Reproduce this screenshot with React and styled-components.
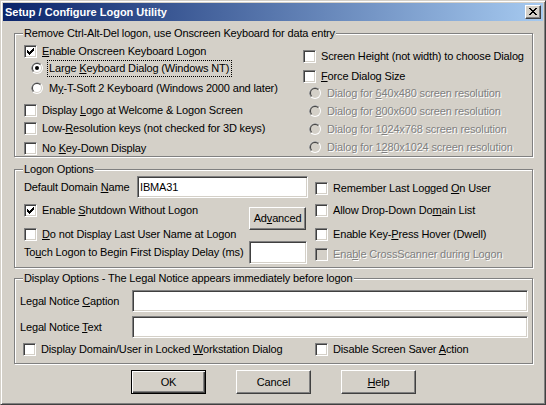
import React from 'react';
import styled, { createGlobalStyle } from 'styled-components';

const FACE = '#D4D0C8';
const SHADOW = '#808080';
const DARK = '#404040';

const GlobalStyle = createGlobalStyle`
  html, body {
    margin: 0;
    padding: 0;
    background: ${FACE};
  }
  body {
    font-family: "Liberation Sans", Arial, sans-serif;
    font-size: 11px;
  }
`;

const Window = styled.div`
  width: 546px;
  height: 405px;
  box-sizing: border-box;
  border: 1px solid;
  border-color: ${FACE} ${DARK} ${DARK} ${FACE};
  box-shadow: inset 1px 1px #fff, inset -1px -1px ${SHADOW};
  padding: 2px;
  background: ${FACE};
  display: flex;
  flex-direction: column;
  font: 11px "Liberation Sans", Arial, sans-serif;
  letter-spacing: -0.15px;
  color: #000;
`;

const TitleBar = styled.div`
  height: 18px;
  flex-shrink: 0;
  display: flex;
  align-items: center;
  padding: 0 2px;
  background: linear-gradient(to right, #0A246A, #A6CAF0);
  color: #fff;
  font-weight: bold;
  letter-spacing: 0;
`;

const Title = styled.span`
  flex: 1;
  line-height: 13px;
  white-space: nowrap;
`;

// raised frame shared by push buttons
const raised = `
  box-sizing: border-box;
  background: ${FACE};
  border: 1px solid;
  border-color: #fff ${DARK} ${DARK} #fff;
  box-shadow: inset -1px -1px ${SHADOW};
  padding: 0;
  font: 11px "Liberation Sans", Arial, sans-serif;
  letter-spacing: -0.15px;
  color: #000;
`;

const CloseButton = styled.button`
  ${raised}
  width: 16px;
  height: 14px;
  display: flex;
  align-items: center;
  justify-content: center;
  svg { display: block; }
`;

const Body = styled.div`
  display: flex;
  flex-direction: column;
  padding: 12px 10px 0 11px;
`;

const Group = styled.div`
  position: relative;
  border: 1px solid ${SHADOW};
  box-shadow: inset 1px 1px #fff, 1px 1px #fff;
  padding: ${p => p.$pad};
  margin-top: ${p => p.$mt || 0}px;
`;

const Caption = styled.span`
  position: absolute;
  top: -7px;
  left: 8px;
  padding: 0 1px;
  line-height: 13px;
  background: ${FACE};
  white-space: nowrap;
`;

const Columns = styled.div`
  display: flex;
  align-items: flex-start;
`;

const Column = styled.div`
  display: flex;
  flex-direction: column;
  width: ${p => (p.$w ? `${p.$w}px` : 'auto')};
  flex: ${p => (p.$w ? 'none' : 1)};
`;

const Option = styled.label`
  display: flex;
  align-items: center;
  height: 13px;
  gap: ${p => p.$gap ?? 5}px;
  margin-top: ${p => p.$mt || 0}px;
  margin-left: ${p => p.$ml || 0}px;
  white-space: nowrap;
  line-height: 13px;
  color: ${p => (p.$disabled ? SHADOW : '#000')};
  text-shadow: ${p => (p.$disabled ? '1px 1px 0 #fff' : 'none')};
  svg { display: block; flex: none; align-self: flex-start; }
`;

const FocusText = styled.span`
  border: 1px dotted ${p => (p.$focus ? '#000' : 'transparent')};
  padding: 1px 2px 1px 1px;
  margin: -2px 0;
`;

const Box = styled.span`
  width: 13px;
  height: 13px;
  flex: none;
  box-sizing: border-box;
  border: 1px solid;
  border-color: ${SHADOW} #fff #fff ${SHADOW};
  box-shadow: inset 1px 1px ${DARK}, inset -1px -1px ${FACE};
  background: ${p => (p.$disabled ? FACE : '#fff')};
`;

const FieldRow = styled.div`
  display: flex;
  align-items: center;
  margin-top: ${p => p.$mt || 0}px;
`;

const FieldLabel = styled.span`
  width: ${p => p.$w}px;
  flex: none;
  white-space: nowrap;
  line-height: 13px;
`;

const Field = styled.input`
  box-sizing: border-box;
  width: ${p => (p.$w ? `${p.$w}px` : 'auto')};
  flex: ${p => (p.$w ? 'none' : 1)};
  min-width: 0;
  height: ${p => p.$h || 22}px;
  margin: 0;
  padding: 0 2px;
  border: 1px solid;
  border-color: ${SHADOW} #fff #fff ${SHADOW};
  box-shadow: inset 1px 1px ${DARK}, inset -1px -1px ${FACE};
  background: #fff;
  font: 11px "Liberation Sans", Arial, sans-serif;
  letter-spacing: -0.15px;
  color: #000;
  outline: none;
`;

const SplitRow = styled.div`
  display: grid;
  grid-template-columns: ${p => p.$cols};
  align-items: start;
  margin-top: ${p => p.$mt || 0}px;
`;

const Button = styled.button`
  ${raised}
  width: ${p => p.$w || 75}px;
  height: ${p => p.$h || 24}px;
  margin-top: ${p => p.$mt || 0}px;
  line-height: 13px;
  ${p =>
    p.$default &&
    `
    border-color: #000;
    box-shadow: inset 1px 1px #fff, inset -1px -1px ${DARK}, inset -2px -2px ${SHADOW};
  `}
`;

const ButtonRow = styled.div`
  display: flex;
  justify-content: center;
  gap: 30px;
  margin-top: 6px;
`;

const TICK = [[2, 4], [3, 5], [4, 6], [5, 5], [6, 4], [7, 3], [8, 2]];

function CheckBox({ checked, disabled }) {
  return (
    <Box $disabled={disabled}>
      {checked && (
        <svg width="11" height="11" shapeRendering="crispEdges">
          {TICK.map(([x, y], i) => (
            <rect key={i} x={x} y={y} width="1" height="3" fill="#000" />
          ))}
        </svg>
      )}
    </Box>
  );
}

function RadioMark({ checked, disabled }) {
  return (
    <svg width="12" height="12" viewBox="0 0 12 12">
      <circle cx="6" cy="6" r="6" fill="#fff" />
      <path d="M1.76 10.24A6 6 0 0 1 10.24 1.76L6 6Z" fill={SHADOW} />
      <circle cx="6" cy="6" r="5" fill={FACE} />
      <path d="M2.46 9.54A5 5 0 0 1 9.54 2.46L6 6Z" fill={DARK} />
      <circle cx="6" cy="6" r="4" fill={disabled ? FACE : '#fff'} />
      {checked && <circle cx="6" cy="6" r="2" fill="#000" />}
    </svg>
  );
}

const X_GLYPH = [
  [0, 0, 2], [6, 0, 2], [1, 1, 2], [5, 1, 2], [2, 2, 4], [3, 3, 2],
  [2, 4, 4], [1, 5, 2], [5, 5, 2], [0, 6, 2], [6, 6, 2],
];

function Check({ children, checked, disabled, mt, ml }) {
  return (
    <Option $mt={mt} $ml={ml} $disabled={disabled}>
      <CheckBox checked={checked} disabled={disabled} />
      <span>{children}</span>
    </Option>
  );
}

function Radio({ children, checked, disabled, focus, mt, ml }) {
  if (disabled) {
    return (
      <Option $mt={mt} $ml={ml} $gap={6} $disabled>
        <RadioMark disabled />
        <span>{children}</span>
      </Option>
    );
  }
  return (
    <Option $mt={mt} $ml={ml} $gap={4}>
      <RadioMark checked={checked} />
      <FocusText $focus={focus}>{children}</FocusText>
    </Option>
  );
}

export default function App() {
  return (
    <>
      <GlobalStyle />
      <Window>
        <TitleBar>
          <Title>Setup / Configure Logon Utility</Title>
          <CloseButton aria-label="Close">
            <svg width="8" height="8" shapeRendering="crispEdges">
              {X_GLYPH.map(([x, y, w], i) => (
                <rect key={i} x={x} y={y} width={w} height="1" fill="#000" />
              ))}
            </svg>
          </CloseButton>
        </TitleBar>

        <Body>
          <Group $pad="11px 0 1px 9px">
            <Caption>Remove Ctrl-Alt-Del logon, use Onscreen Keyboard for data entry</Caption>
            <Columns>
              <Column $w={279}>
                <Check checked><u>E</u>nable Onscreen Keyboard Logon</Check>
                <Radio mt={4} ml={7} checked focus>Large <u>K</u>eyboard Dialog (Windows NT)</Radio>
                <Radio mt={7} ml={7}>M<u>y</u>-T-Soft 2 Keyboard (Windows 2000 and later)</Radio>
                <Check mt={9}>Display <u>L</u>ogo at Welcome &amp; Logon Screen</Check>
                <Check mt={5}>Low-<u>R</u>esolution keys (not checked for 3D keys)</Check>
                <Check mt={7}>No <u>K</u>ey-Down Display</Check>
              </Column>
              <Column>
                <Check mt={5}>Screen Hei<u>g</u>ht (not width) to choose Dialog</Check>
                <Check mt={7}><u>F</u>orce Dialog Size</Check>
                <Radio mt={4} ml={6} disabled>Dialog for <u>6</u>40x480 screen resolution</Radio>
                <Radio mt={5} ml={6} disabled>Dialog for <u>8</u>00x600 screen resolution</Radio>
                <Radio mt={5} ml={6} disabled>Dialog for 1<u>0</u>24x768 screen resolution</Radio>
                <Radio mt={5} ml={6} disabled>Dialog for 1<u>2</u>80x1024 screen resolution</Radio>
              </Column>
            </Columns>
          </Group>

          <Group $mt={12} $pad="6px 0 3px 9px">
            <Caption>Logon Options</Caption>
            <Columns>
              <Column $w={291}>
                <FieldRow>
                  <FieldLabel $w={113}>Default Domain <u>N</u>ame</FieldLabel>
                  <Field $w={171} defaultValue="IBMA31" />
                </FieldRow>
                <SplitRow $cols="225px 57px">
                  <Column>
                    <Check mt={6} checked>Enable <u>S</u>hutdown Without Logon</Check>
                    <Check mt={11}><u>D</u>o not Display Last User Name at Logon</Check>
                  </Column>
                  <Button $w={57} $h={23} $mt={9}>Ad<u>v</u>anced</Button>
                </SplitRow>
                <FieldRow>
                  <FieldLabel $w={225}>To<u>u</u>ch Logon to Begin First Display Delay (ms)</FieldLabel>
                  <Field $w={58} $h={23} />
                </FieldRow>
              </Column>
              <Column>
                <Check mt={6}>Remember Last Logged <u>O</u>n User</Check>
                <Check mt={9}>Allow Drop-Down Do<u>m</u>ain List</Check>
                <Check mt={11}>Enable Key-<u>P</u>ress Hover (Dwell)</Check>
                <Check mt={7} disabled>Ena<u>b</u>le CrossScanner during Logon</Check>
              </Column>
            </Columns>
          </Group>

          <Group $mt={10} $pad="11px 4px 7px 5px">
            <Caption>Display Options - The Legal Notice appears immediately before logon</Caption>
            <FieldRow>
              <FieldLabel $w={112}>Legal Notice <u>C</u>aption</FieldLabel>
              <Field />
            </FieldRow>
            <FieldRow $mt={4}>
              <FieldLabel $w={112}>Legal Notice <u>T</u>ext</FieldLabel>
              <Field />
            </FieldRow>
            <SplitRow $cols="295px 1fr" $mt={5}>
              <Check ml={3}>Display Domain/User in Locked <u>W</u>orkstation Dialog</Check>
              <Check>Disable Screen Saver <u>A</u>ction</Check>
            </SplitRow>
          </Group>

          <ButtonRow>
            <Button $default>OK</Button>
            <Button>Cancel</Button>
            <Button><u>H</u>elp</Button>
          </ButtonRow>
        </Body>
      </Window>
    </>
  );
}
